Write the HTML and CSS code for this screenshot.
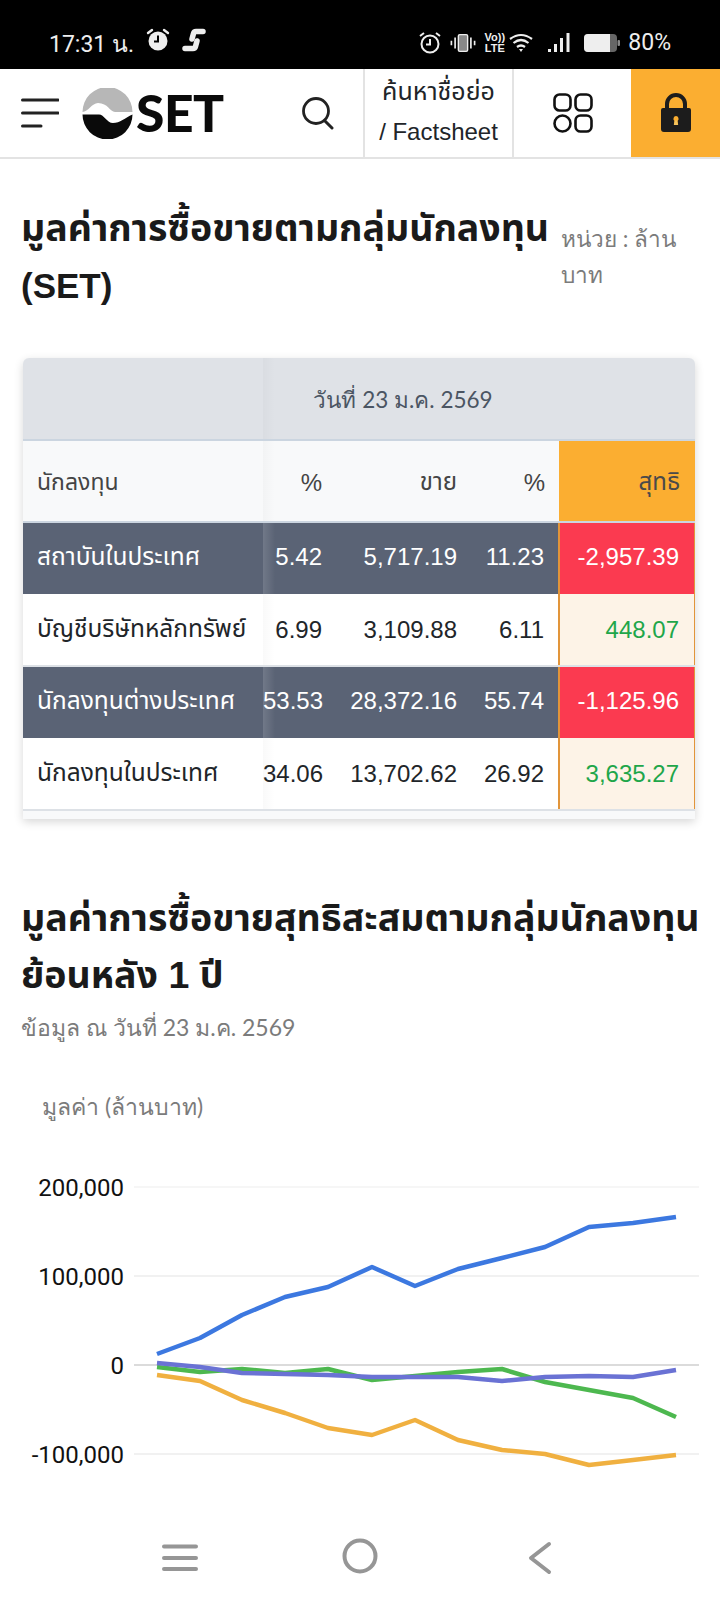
FILE: index.html
```html
<!DOCTYPE html>
<html lang="th">
<head>
<meta charset="utf-8">
<title>SET</title>
<link rel="stylesheet" href="styles.css">
</head>
<body>
<div class="page">
  <div class="status">
    <div class="status-left">
      <span class="clock">17:31 น.</span>
      <svg class="st-ic" width="26" height="26" viewBox="0 0 26 26"><circle cx="13" cy="14" r="9.500" fill="#eee"/><path d="M13 8.500V14.500H9" fill="none" stroke="#000" stroke-width="2"/><path d="M3 6L7 3M23 6L19 3" stroke="#eee" stroke-width="2.400" stroke-linecap="round"/></svg>
      <svg class="st-ic" width="24" height="26" viewBox="0 0 24 26"><path d="M21 4.500H14Q12 4.500 11.500 6.500L10 12" fill="none" stroke="#eee" stroke-width="5.500" stroke-linecap="round"/><path d="M3 21.500H11Q13 21.500 13.500 19.500L15 14" fill="none" stroke="#eee" stroke-width="5.500" stroke-linecap="round"/></svg>
    </div>
    <div class="status-right">
      <svg width="24" height="24" viewBox="0 0 24 24"><circle cx="12" cy="13" r="8.500" fill="none" stroke="#eee" stroke-width="2"/><path d="M12 8V13.500H8M2 5L6 2M22 5L18 2" fill="none" stroke="#eee" stroke-width="2"/></svg>
      <svg width="26" height="22" viewBox="0 0 28 22"><rect x="9" y="2" width="10" height="18" rx="1.500" fill="#888" stroke="#eee" stroke-width="1.500"/><path d="M5.500 5V17M22.500 5V17M1.500 8.500V13.500M26.500 8.500V13.500" stroke="#eee" stroke-width="1.800"/></svg>
      <span class="volte"><span>Vo))</span><span>LTE</span></span>
      <svg width="26" height="22" viewBox="0 0 26 22"><path d="M2 7Q13 -1 24 7M5.500 11Q13 5 20.500 11M9 15Q13 12 17 15" fill="none" stroke="#eee" stroke-width="2.200"/><path d="M11 17H15L13 20Z" fill="#eee"/></svg>
      <svg class="signal" width="24" height="22" viewBox="0 0 24 22"><rect x="1" y="17" width="3" height="3" fill="#eee"/><rect x="7" y="12" width="3" height="8" fill="#eee"/><rect x="13" y="6" width="3" height="14" fill="#eee"/><rect x="19.500" y="1" width="3" height="19" fill="#eee"/></svg>
      <svg class="batt" width="36" height="20" viewBox="0 0 36 20"><rect x="0" y="1" width="33" height="18" rx="4" fill="#666"/><path d="M4 1H26V19H4Q0 19 0 15V5Q0 1 4 1Z" fill="#eee"/><rect x="33.500" y="7" width="2.500" height="6" rx="1" fill="#888"/></svg>
      <span class="pct">80%</span>
    </div>
  </div>

  <header class="nav">
    <div class="nav-brand">
      <svg class="burger" width="38" height="30" viewBox="0 0 38 30"><path d="M1.500 2H37M1.500 15H37M1.500 28H20" stroke="#222" stroke-width="3" stroke-linecap="round"/></svg>
      <svg class="logo-mark" width="51" height="51" viewBox="0 0 51 51"><path d="M0.500 24A25 25 0 0 1 50.500 24H33C28 24 26 15 16 15C10 15 6 24 0.500 24Z" fill="#b7b7b7"/><path d="M0.500 26.500H17C22 26.500 25 35 31 35C38 35 43 30 50.500 26.500A25 25 0 0 1 0.500 26.500Z" fill="#0a0a0a"/></svg>
      <span class="logo-text">SET</span>
    </div>
    <div class="nav-search"><svg width="34" height="34" viewBox="0 0 34 34"><circle cx="15" cy="15" r="12.500" fill="none" stroke="#222" stroke-width="2.800"/><path d="M24 25L31 32" stroke="#222" stroke-width="3" stroke-linecap="round"/></svg></div>
    <div class="nav-find"><span class="find-thai">ค้นหาชื่อย่อ</span><br>/ Factsheet</div>
    <div class="nav-grid"><svg width="40" height="40" viewBox="0 0 40 40"><g fill="none" stroke="#111" stroke-width="2.600"><rect x="1.500" y="1.500" width="16" height="16" rx="5"/><rect x="22.500" y="1.500" width="16" height="16" rx="5"/><circle cx="9.500" cy="30.500" r="8"/><rect x="22.500" y="22.500" width="16" height="16" rx="5"/></g></svg></div>
    <div class="nav-lock"><svg width="32" height="42" viewBox="0 0 32 42"><path d="M7 18V12A9 9 0 0 1 25 12V18" fill="none" stroke="#1c1c1c" stroke-width="4"/><path fill-rule="evenodd" d="M3 16H29Q31 16 31 18V37Q31 40 28 40H4Q1 40 1 37V18Q1 16 3 16ZM16 24A2.800 2.800 0 0 0 14.500 29L13.800 33H18.200L17.500 29A2.800 2.800 0 0 0 16 24Z" fill="#1c1c1c"/><path d="M14 33L14.700 28.500H17.300L18 33Z" fill="#f5c35c"/></svg></div>
  </header>

  <main class="content">
    <section class="title-row">
      <h1 class="title title-main">มูลค่าการซื้อขายตามกลุ่มนักลงทุน <span class="latin">(SET)</span></h1>
      <div class="unit">หน่วย : ล้านบาท</div>
    </section>

    <div class="table-card">
      <table class="flow">
        <colgroup><col class="c1"><col class="c2"><col class="c3"><col class="c4"><col class="c5"></colgroup>
        <thead>
          <tr class="head-date"><th class="sticky"></th><th colspan="4" class="date">วันที่ 23 ม.ค. 2569</th></tr>
          <tr class="head-cols"><th class="sticky left">นักลงทุน</th><th>%</th><th>ขาย</th><th class="pr">%</th><th class="net-head">สุทธิ</th></tr>
        </thead>
        <tbody>
          <tr class="dark"><td class="sticky left">สถาบันในประเทศ</td><td>5.42</td><td>5,717.19</td><td class="pr">11.23</td><td class="net neg">-2,957.39</td></tr>
          <tr class="light"><td class="sticky left">บัญชีบริษัทหลักทรัพย์</td><td>6.99</td><td>3,109.88</td><td class="pr">6.11</td><td class="net pos">448.07</td></tr>
          <tr class="dark"><td class="sticky left">นักลงทุนต่างประเทศ</td><td>53.53</td><td>28,372.16</td><td class="pr">55.74</td><td class="net neg">-1,125.96</td></tr>
          <tr class="light"><td class="sticky left">นักลงทุนในประเทศ</td><td>34.06</td><td>13,702.62</td><td class="pr">26.92</td><td class="net pos">3,635.27</td></tr>
        </tbody>
      </table>
      <div class="table-foot"></div>
    </div>

    <h2 class="title title-second">มูลค่าการซื้อขายสุทธิสะสมตามกลุ่มนักลงทุนย้อนหลัง 1 ปี</h2>
    <p class="asof">ข้อมูล ณ วันที่ 23 ม.ค. 2569</p>
    <p class="axis-title">มูลค่า (ล้านบาท)</p>

    <svg class="chart" width="720" height="310" viewBox="0 1160 720 310">
      <g class="grid">
        <line x1="134" x2="699" y1="1187" y2="1187" stroke="#f3f3f3" stroke-width="1.500"/>
        <line x1="134" x2="699" y1="1276" y2="1276" stroke="#ececec" stroke-width="1.500"/>
        <line x1="134" x2="699" y1="1365" y2="1365" stroke="#cfcfcf" stroke-width="1.500"/>
        <line x1="134" x2="699" y1="1454" y2="1454" stroke="#ececec" stroke-width="1.500"/>
      </g>
      <g class="ylab">
        <text x="124" y="1196">200,000</text>
        <text x="124" y="1285">100,000</text>
        <text x="124" y="1374">0</text>
        <text x="124" y="1463">-100,000</text>
      </g>
      <g fill="none" stroke-width="4.500" stroke-linejoin="round">
        <polyline stroke="#3c78e0" points="157,1354 200,1338 242,1315 285,1297 328,1287 372,1267 415,1286 458,1269 502,1258 545,1247 589,1227 633,1223 676,1217"/>
        <polyline stroke="#f0b040" points="157,1375 200,1381 242,1400 285,1413 328,1428 372,1435 415,1420 458,1440 502,1450 545,1454 589,1465 633,1460 676,1455"/>
        <polyline stroke="#4db84f" points="157,1367 200,1372 242,1369 285,1373 328,1369 372,1380 415,1376 458,1372 502,1369 545,1382 589,1390 633,1398 676,1417"/>
        <polyline stroke="#6a72d4" points="157,1363 200,1367 242,1373 285,1374 328,1375 372,1377 415,1377 458,1377 502,1381 545,1377 589,1376 633,1377 676,1370"/>
      </g>
    </svg>
  </main>

  <nav class="sysnav">
    <svg width="36" height="28" viewBox="0 0 36 28"><path d="M2 2.500H34M2 14H34M2 25H34" stroke="#969696" stroke-width="4" stroke-linecap="round"/></svg>
    <svg width="36" height="36" viewBox="0 0 36 36"><circle cx="18" cy="18" r="15.500" fill="none" stroke="#969696" stroke-width="4"/></svg>
    <svg width="24" height="34" viewBox="0 0 24 34"><path d="M21 3L3 17L21 31" fill="none" stroke="#969696" stroke-width="4" stroke-linecap="round" stroke-linejoin="round"/></svg>
  </nav>
</div>
</body>
</html>
```

FILE: styles.css
```css
* { box-sizing: border-box; }
html, body { margin: 0; padding: 0; background: #fff; }
body { font-family: "Liberation Sans", "Noto Sans Thai", "Noto Sans", "DejaVu Sans", sans-serif; color: #212529; }
.page { width: 720px; height: 1600px; overflow: hidden; position: relative; display: flex; flex-direction: column; }

.status { height: 69px; background: #000; color: #eee; display: flex; justify-content: space-between; align-items: flex-end; padding: 0 49px 12px; flex: none; }
.status-left { display: flex; align-items: center; gap: 11px; margin-bottom: -2px; }
.clock { font: 400 23px/28px Roboto, "Noto Sans", "DejaVu Sans", sans-serif; margin-top: 6px; }
.st-ic { margin-top: -4px; }
.status-right { display: flex; align-items: center; gap: 8px; }
.volte { display: flex; flex-direction: column; font: 700 11px/11px "Liberation Sans", sans-serif; align-items: center; width: 21px; white-space: nowrap; margin-right: -5px; }
.signal { margin-left: 5px; }
.batt { margin-left: 5px; }
.pct { font: 400 23px/28px Roboto, sans-serif; }

.nav { height: 90px; border-bottom: 2px solid #e3e3e3; display: flex; flex: none; }
.nav-brand { width: 280px; display: flex; align-items: center; padding-left: 21px; }
.burger { flex: none; }
.logo-mark { margin-left: 23px; flex: none; }
.logo-text { font: 900 51.5px/1 Lato, sans-serif; color: #0a0a0a; margin-left: 3px; letter-spacing: -0.5px; }
.nav-search { width: 83px; display: flex; align-items: center; justify-content: center; padding-right: 8px; }
.nav-find { width: 151px; border-left: 2px solid #e3e3e3; border-right: 2px solid #e3e3e3; text-align: center; font-size: 24px; line-height: 40px; color: #212529; white-space: nowrap; padding-top: 2px; }
.find-thai { font-size: 25px; }
.nav-grid { width: 117px; display: flex; align-items: center; justify-content: center; }
.nav-lock { width: 89px; background: #fbae31; display: flex; align-items: center; justify-content: center; }

.content { flex: 1; min-height: 0; }
.title-row { display: flex; padding: 41px 21px 0; align-items: flex-start; }
.title { margin: 0; font-size: 37.5px; line-height: 57px; font-weight: 700; color: #1a1a1a; }
.latin { font-size: 35px; }
.title-main { width: 541px; flex: none; }
.unit { font-family: Lato, "DejaVu Sans", sans-serif; font-size: 22.6px; line-height: 36px; color: #7b7b7b; margin-top: 21px; margin-left: -1px; }

.table-card { margin: 44px 25px 0 23px; box-shadow: 0 3px 10px rgba(0,0,0,.16); border-radius: 6px 6px 0 0; overflow: hidden; background: #f8f9fa; }
table.flow { border-collapse: collapse; table-layout: fixed; width: 672px; }
.c1 { width: 240px; } .c2 { width: 74px; } .c3 { width: 135px; } .c4 { width: 87px; } .c5 { width: 136px; }
th, td { padding: 0 15px 0 0; text-align: right; font-weight: 400; font-size: 24px; white-space: nowrap; }
th.pr, td.pr { padding-right: 14px; }
.left { text-align: left; padding-left: 14px; }
td.left { font-size: 24.5px; }
th.left { font-size: 23px; }
.sticky { position: relative; }
.sticky::after { content: ""; position: absolute; top: 0; bottom: 0; left: 100%; width: 12px; background: linear-gradient(to right, rgba(0,0,0,.025), rgba(0,0,0,0)); }
.dark .sticky::after { background: linear-gradient(to right, rgba(255,255,255,.14), rgba(255,255,255,0)); }
.head-date th { height: 82px; background: #dfe2e7; color: #4b5563; border-bottom: 2px solid #cbd5e0; padding-top: 3px; }
th.date { text-align: center; padding: 3px 152px 0 0; font-family: Lato, "DejaVu Sans", sans-serif; font-size: 22.5px; }
.head-cols th { height: 82px; background: #f8f9fa; color: #444; border-bottom: 2px solid #cbd5e0; padding-top: 3px; }
.head-cols th.net-head { background: #fbae31; color: #4a4a4a; }
tbody tr { height: 72px; }
.dark td { background: #5a6375; color: #fff; padding-bottom: 3px; }
.light td { background: #fff; color: #212529; border-bottom: 2px solid #dde1e6; }
td.net { border-left: 2px solid #e2953a; border-right: 2px solid #e2953a; }
td.neg { background: #fb3a50; color: #fff; }
td.pos { background: #fdf3e7; color: #1fa64a; }
.table-foot { height: 8px; background: #f8f9fa; }

.title-second { margin: 71px 21px 0; width: 690px; }
.asof { font-family: Lato, "DejaVu Sans", sans-serif; margin: 5px 21px 0; font-size: 23px; line-height: 36px; color: #7b7b7b; }
.axis-title { font-family: Lato, "DejaVu Sans", sans-serif; margin: 43px 0 0 42px; font-size: 23px; line-height: 36px; color: #7b7b7b; }
.chart { display: block; margin-top: 36px; }
.ylab text { font: 400 24px Roboto, sans-serif; fill: #111; text-anchor: end; }

.sysnav { position: absolute; left: 0; right: 0; bottom: 0; height: 90px; display: flex; }
.sysnav svg { position: absolute; top: 28px; }
.sysnav svg:nth-child(1) { left: 162px; top: 34px; }
.sysnav svg:nth-child(2) { left: 342px; }
.sysnav svg:nth-child(3) { left: 528px; top: 31px; }
```
